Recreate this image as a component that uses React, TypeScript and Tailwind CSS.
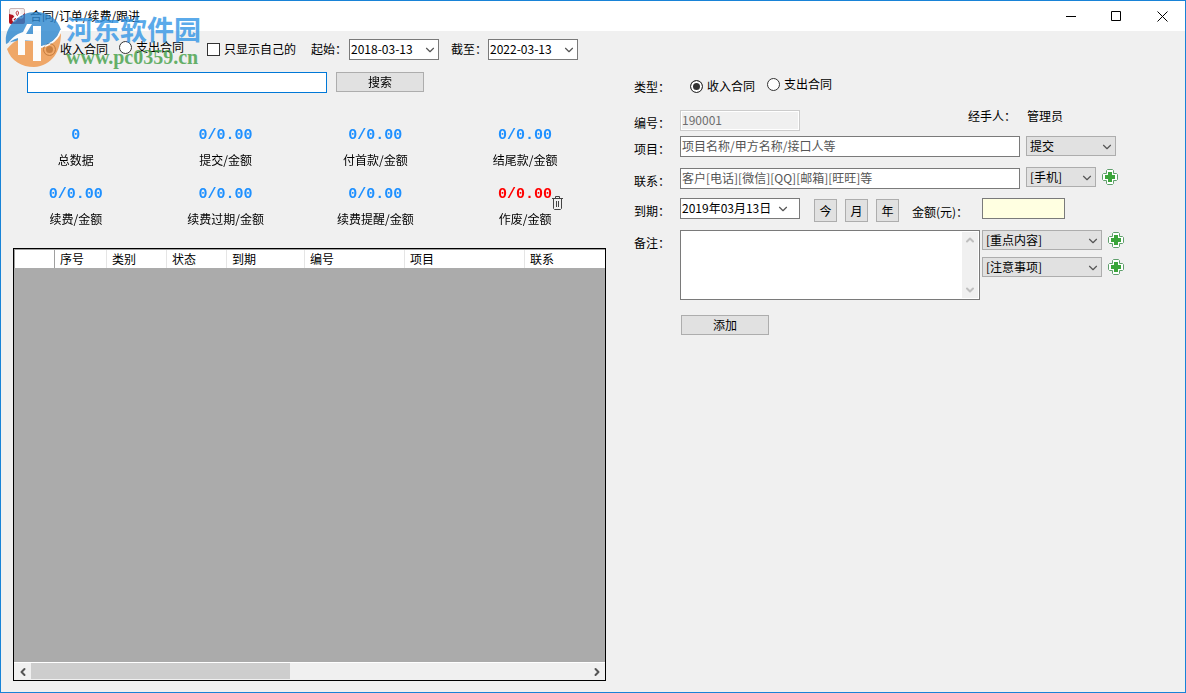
import React, { ReactNode } from 'react';
import { ChevronDown, ChevronLeft, ChevronRight, ChevronUp } from 'lucide-react';
import clsx from 'clsx';

interface Stat {
  value: string;
  label: string;
  danger?: boolean;
}

const stats: Stat[] = [
  { value: '0', label: '总数据' },
  { value: '0/0.00', label: '提交/金额' },
  { value: '0/0.00', label: '付首款/金额' },
  { value: '0/0.00', label: '结尾款/金额' },
  { value: '0/0.00', label: '续费/金额' },
  { value: '0/0.00', label: '续费过期/金额' },
  { value: '0/0.00', label: '续费提醒/金额' },
  { value: '0/0.00', label: '作废/金额', danger: true },
];

const columns = [
  { title: '序号', width: 'w-[52px]' },
  { title: '类别', width: 'w-[60px]' },
  { title: '状态', width: 'w-[60px]' },
  { title: '到期', width: 'w-[78px]' },
  { title: '编号', width: 'w-[100px]' },
  { title: '项目', width: 'w-[120px]' },
  { title: '联系', width: '' },
];

const inputClass =
  'h-[21px] min-w-0 border border-[#7a7a7a] bg-white px-px pb-[2px] outline-none placeholder:text-[#555]';
const buttonClass = 'border border-[#adadad] bg-[#e1e1e1] hover:border-[#0078d7] hover:bg-[#e5f1fb]';

const AppIcon = () => (
  <svg viewBox="0 0 16 16" className="size-4 shrink-0">
    <rect x="0.5" y="0.5" width="15" height="15" rx="1.5" fill="#f4eded" stroke="#c9b5b5" />
    <path d="M0 6l4 1 2 3 5-1 5-4v9a2 2 0 0 1-2 2H2a2 2 0 0 1-2-2z" fill="#b3121d" />
    <path
      d="M8 8C5 6 6 1.500 9 2s2 4 0 6l-4 2c-2 1-1 4 1 3s2-3 2-4l4 1c3 0 2-4 0-3l-3 2"
      fill="none"
      stroke="#fff"
      strokeWidth="1.5"
    />
    <path d="M8 7C6.500 5.500 7 3 8.500 3.200S10 6 8 8" fill="none" stroke="#b3121d" strokeWidth="0.8" />
  </svg>
);

const TrashIcon = () => (
  <svg viewBox="0 0 11 14" className="h-[14px] w-[11px]" fill="none" stroke="#444">
    <path d="M0 2.500h11M3.500 2V0.500h4V2M1.500 3v9.500l1 1h6l1-1V3" />
    <path d="M4.500 5v6M6.500 5v6" />
  </svg>
);

const PlusIcon = () => (
  <svg viewBox="0 0 16 16" className="size-4">
    <path
      d="M5.500 0.500h5l1 1v3h3l1 1v5l-1 1h-3v3l-1 1h-5l-1-1v-3h-3l-1-1v-5l1-1h3v-3z"
      fill="#fff"
      stroke="#5f9f6c"
    />
    <path d="M6 3h4v3h3v4h-3v3H6v-3H3V6h3z" fill="#3aa53a" />
  </svg>
);

const SiteLogo = () => (
  <svg viewBox="0 0 56 56" className="size-14 shrink-0">
    <path d="M1 33C-1 16 13 1 31 1c12 0 22 7 25 18-3 9-10 13-18 16h-5l-5-6-14 1C9 30 4 31 1 33z" fill="#2b86cf" />
    <path d="M2 38c4-5 8-8 11-9v15h7V30h8v20h7V37c9-2 17-6 21-15 0 18-9 33-27 34C17 56 6 50 2 38z" fill="#ef9547" />
    <path d="M1 36c3-5 7-8 12-9v17h7V29h8v21h8V15h-8v8h-7l6-10h-5l-4 8C11 23 5 28 1 36z" fill="#fff" />
    <path d="M36 36c10-2 17-8 20-17" fill="none" stroke="#fff" strokeWidth="1.5" />
  </svg>
);

// Source site badge, laid over the top left corner of the window
const SiteMark = () => (
  <div className="pointer-events-none absolute left-1 top-[10px] z-10 flex items-start gap-[5px] opacity-80">
    <SiteLogo />
    <div className="whitespace-nowrap font-bold">
      <div className="text-[27px] leading-[36px] text-[#3396e5]">河东软件园</div>
      <div className="font-['Liberation_Serif',serif] text-[20px] leading-[20px] text-[#43a047]">www.pc0359.cn</div>
    </div>
  </div>
);

interface SelectProps {
  label: string;
  value: string;
  className?: string;
  light?: boolean;
  inset?: boolean;
}

const Select = ({ label, value, className, light, inset }: SelectProps) => (
  <div className={clsx('relative shrink-0', light ? 'h-[21px]' : 'h-5', className)}>
    <select
      aria-label={label}
      className={clsx(
        'block size-full appearance-none border outline-none',
        light ? 'border-[#7a7a7a] bg-white px-px pb-[2px]' : 'border-[#adadad] bg-[#e1e1e1] px-[3px]',
      )}
    >
      <option>{value}</option>
    </select>
    <ChevronDown
      className={clsx(
        'pointer-events-none absolute top-1 size-[14px] text-[#555]',
        inset ? 'right-[10px]' : 'right-[2px]',
      )}
      strokeWidth={2}
    />
  </div>
);

const Radio = ({ name, label, defaultChecked }: { name: string; label: string; defaultChecked?: boolean }) => (
  <label className="flex shrink-0 items-center gap-1">
    <input
      type="radio"
      name={name}
      defaultChecked={defaultChecked}
      className="size-[13px] appearance-none rounded-full border border-[#333] bg-white checked:bg-[#333] checked:shadow-[inset_0_0_0_2px_white]"
    />
    {label}
  </label>
);

interface RowProps {
  label: string;
  htmlFor?: string;
  className?: string;
  children: ReactNode;
}

const Row = ({ label, htmlFor, className, children }: RowProps) => (
  <div className={clsx('flex items-start', className)}>
    <label htmlFor={htmlFor} className="mt-[2px] w-[46px] shrink-0 leading-[21px]">
      {label}
    </label>
    {children}
  </div>
);

const AddButton = ({ label }: { label: string }) => (
  <button type="button" aria-label={label} className="ml-[6px] mt-[2px] size-4 shrink-0">
    <PlusIcon />
  </button>
);

const TitleBar = () => (
  <header className="flex h-[30px] items-center bg-white pl-2">
    <AppIcon />
    <h1 className="ml-[5px] flex-1">合同/订单/续费/跟进</h1>
    <button type="button" aria-label="最小化" className="flex h-full w-[45px] items-center justify-center">
      <svg viewBox="0 0 11 11" className="size-[11px]" stroke="#000"><path d="M0 5.500h10" /></svg>
    </button>
    <button type="button" aria-label="最大化" className="flex h-full w-[45px] items-center justify-center">
      <svg viewBox="0 0 11 11" className="size-[11px]" stroke="#000" fill="none"><path d="M0.500 0.500h9v9h-9z" /></svg>
    </button>
    <button type="button" aria-label="关闭" className="flex h-full w-[46px] items-center justify-center">
      <svg viewBox="0 0 11 11" className="size-[11px]" stroke="#000"><path d="M0.500 0.500l10 10M10.500 0.500l-10 10" /></svg>
    </button>
  </header>
);

const Filters = () => (
  <div className="mt-[7px] flex items-center pl-[42px]">
    <Radio name="filterType" label="收入合同" defaultChecked />
    <div className="ml-[11px] flex pb-1">
      <Radio name="filterType" label="支出合同" />
    </div>
    <label className="ml-[23px] flex shrink-0 items-center gap-1">
      <input type="checkbox" className="size-[13px] appearance-none border border-[#333] bg-white checked:bg-[#333]" />
      只显示自己的
    </label>
    <span className="ml-[15px] w-[38px] shrink-0">起始：</span>
    <Select label="起始" value="2018-03-13" light className="w-[90px]" />
    <span className="ml-3 w-[37px] shrink-0">截至：</span>
    <Select label="截至" value="2022-03-13" light className="w-[90px]" />
  </div>
);

const StatGrid = () => (
  <dl className="mt-[33px] grid grid-cols-4 gap-y-[15px] pr-[6px] text-center">
    {stats.map((stat) => (
      <div key={stat.label} className="flex flex-col-reverse">
        <dt className="mt-1 leading-5">{stat.label}</dt>
        <dd
          className={clsx(
            "font-['Liberation_Mono',monospace] text-[15px] font-bold leading-5",
            stat.danger ? 'text-[#ff0000]' : 'text-[#1e90ff]',
          )}
        >
          <span className="relative">
            {stat.value}
            {stat.danger && (
              <button type="button" aria-label="清空作废" className="absolute left-full top-[10px]">
                <TrashIcon />
              </button>
            )}
          </span>
        </dd>
      </div>
    ))}
  </dl>
);

const DataGrid = () => (
  <div className="ml-3 mt-[19px] flex flex-1 flex-col border border-black bg-[#ababab]">
    <div className="flex-1 overflow-hidden">
      <table className="w-full table-fixed border-separate border-spacing-0 border-l border-t border-[#a0a0a0] bg-white text-left">
        <thead>
          <tr className="h-[18px]">
            <th aria-label="选择" className="w-10 border-r border-r-[#a0a0a0] p-0" />
            {columns.map((col) => (
              <th
                key={col.title}
                className={clsx(
                  'border-r border-r-[#e5e5e5] p-0 pl-[5px] font-normal leading-[18px] last:border-r-0',
                  col.width,
                )}
              >
                {col.title}
              </th>
            ))}
          </tr>
        </thead>
      </table>
    </div>
    <div className="flex h-[18px] border-t border-white bg-[#f0f0f0]">
      <button type="button" aria-label="向左滚动" className="flex w-[17px] items-center justify-center">
        <ChevronLeft className="size-3 text-[#555]" strokeWidth={4} />
      </button>
      <div className="flex-1">
        <div className="h-4 w-[46.5%] bg-[#cdcdcd]" />
      </div>
      <button type="button" aria-label="向右滚动" className="flex w-[17px] items-center justify-center">
        <ChevronRight className="size-3 text-[#555]" strokeWidth={4} />
      </button>
    </div>
  </div>
);

const ContractForm = () => (
  <form className="pl-7 pt-[43px]">
    <Row label="类型：">
      <div className="ml-[10px] flex h-6 items-center gap-3">
        <Radio name="contractType" label="收入合同" defaultChecked />
        <div className="pb-1">
          <Radio name="contractType" label="支出合同" />
        </div>
      </div>
    </Row>
    <Row label="编号：" htmlFor="code" className="mt-3">
      <div className="flex max-w-[340px] flex-1 justify-between">
        <input
          id="code"
          disabled
          defaultValue="190001"
          className="h-[21px] w-[120px] border border-[#ccc] bg-[#f0f0f0] px-px pb-[2px] text-[#6d6d6d] shadow-[inset_0_0_0_1px_white]"
        />
        <span className="w-[52px] leading-[12px]">经手人：</span>
      </div>
      <span className="ml-[7px] leading-[12px]">管理员</span>
    </Row>
    <Row label="项目：" htmlFor="project" className="mt-[3px]">
      <input id="project" placeholder="项目名称/甲方名称/接口人等" className={clsx(inputClass, 'max-w-[340px] flex-1')} />
      <Select label="状态" value="提交" className="ml-[6px] w-[90px]" />
    </Row>
    <Row label="联系：" htmlFor="contact" className="mt-[9px]">
      <input
        id="contact"
        placeholder="客户[电话][微信][QQ][邮箱][旺旺]等"
        className={clsx(inputClass, 'max-w-[340px] flex-1')}
      />
      <div className="-mt-px ml-[6px] flex">
        <Select label="联系方式" value="[手机]" className="w-[70px]" />
        <AddButton label="添加联系方式" />
      </div>
    </Row>
    <Row label="到期：" className="mt-[7px]">
      <Select label="到期" value="2019年03月13日" light inset className="w-[120px]" />
      <div className="ml-[14px] mt-px flex gap-2">
        {['今', '月', '年'].map((unit) => (
          <button key={unit} type="button" className={clsx(buttonClass, 'h-[23px] w-[23px]')}>
            {unit}
          </button>
        ))}
      </div>
      <label htmlFor="amount" className="ml-[13px] mt-[3px] w-[70px] leading-[21px]">
        金额(元)：
      </label>
      <input id="amount" className="h-[21px] w-[83px] border border-[#7a7a7a] bg-[#ffffe1] px-px outline-none" />
    </Row>
    <Row label="备注：" htmlFor="remark" className="mt-2">
      <div className="flex h-[70px] max-w-[300px] flex-1 border border-[#7a7a7a] bg-white p-px">
        <textarea id="remark" className="min-w-0 flex-1 resize-none outline-none" />
        <div className="flex w-4 flex-col items-center justify-between bg-[#f0f0f0] py-[2px] text-[#bfbfbf]">
          <ChevronUp className="size-3" strokeWidth={4} />
          <ChevronDown className="size-3" strokeWidth={4} />
        </div>
      </div>
      <div className="ml-[2px] flex flex-col gap-[7px]">
        <div className="flex">
          <Select label="重点内容" value="[重点内容]" className="w-[120px]" />
          <AddButton label="添加重点内容" />
        </div>
        <div className="flex">
          <Select label="注意事项" value="[注意事项]" className="w-[120px]" />
          <AddButton label="添加注意事项" />
        </div>
      </div>
    </Row>
    <button type="button" className={clsx(buttonClass, 'ml-[47px] mt-[15px] h-5 w-[88px] leading-[18px]')}>
      添加
    </button>
  </form>
);

const App = () => {
  return (
    <div className="relative flex min-h-screen flex-col border border-[#1883d7] bg-[#f0f0f0] font-['Noto_Sans_CJK_SC',sans-serif] text-[12px] leading-[18px] text-black">
      <SiteMark />
      <TitleBar />
      <main className="grid flex-1 grid-cols-[605fr_579fr]">
        <section className="flex min-w-0 flex-col pb-[11px]">
          <Filters />
          <div className="mt-3 flex pl-[26px]">
            <input
              autoFocus
              aria-label="搜索内容"
              className="h-[21px] w-[300px] border border-[#0078d7] bg-white px-[2px] outline-none"
            />
            <button type="button" className={clsx(buttonClass, 'ml-[9px] h-5 w-[88px] leading-[18px]')}>
              搜索
            </button>
          </div>
          <StatGrid />
          <DataGrid />
        </section>
        <section className="min-w-0">
          <ContractForm />
        </section>
      </main>
    </div>
  );
};

export default App;
